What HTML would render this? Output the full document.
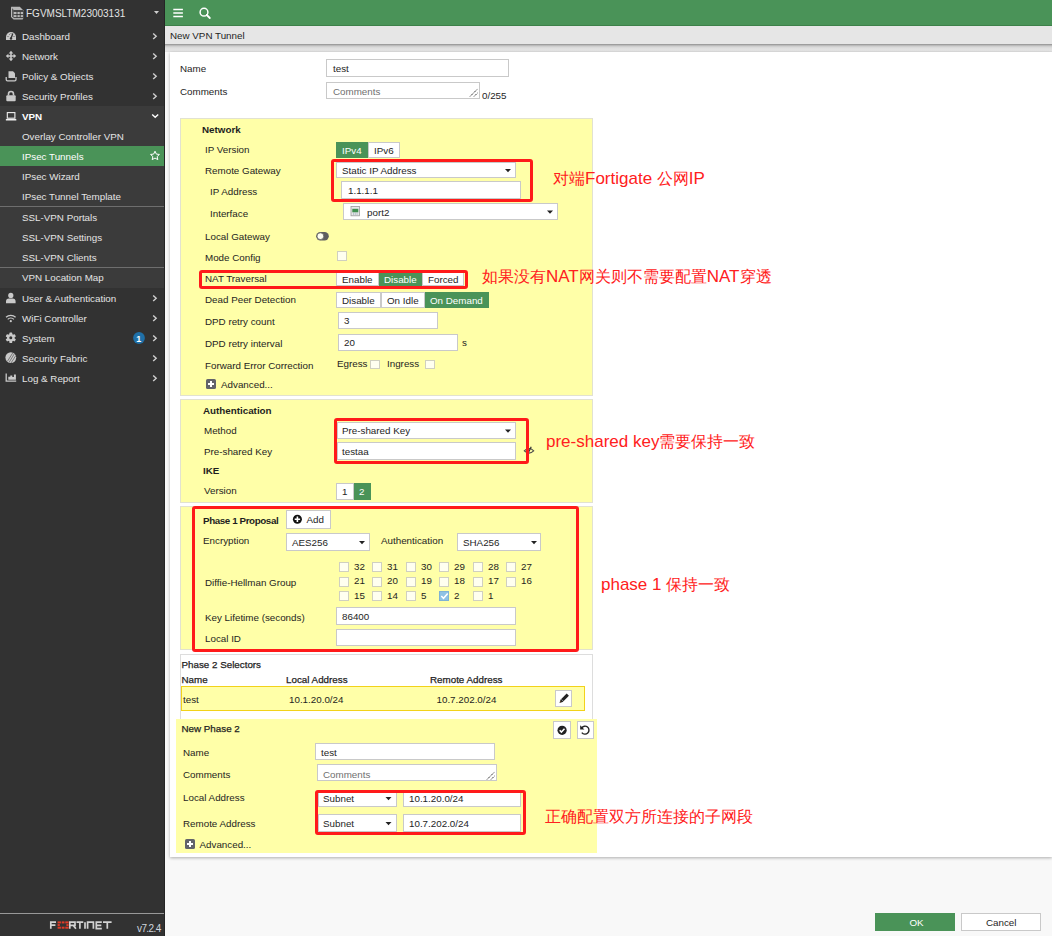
<!DOCTYPE html><html><head><meta charset="utf-8"><style>
*{margin:0;padding:0;box-sizing:border-box}
html,body{width:1052px;height:936px;overflow:hidden;background:#f8f8f8;font-family:"Liberation Sans",sans-serif;font-size:9.8px;color:#1e1e1e}
.t{position:absolute;line-height:12px;white-space:nowrap}
.b{position:absolute}
.side{position:absolute;left:0;top:0;width:165px;height:936px;background:#323232;border-right:1px solid #252525}
.st{color:#e4e4e4}
.bold{font-weight:bold}
.inp{background:#fff;border:1px solid #c9c9c9}
.yel{background:#ffffa8;border:1px solid #e2e2d0}
.red{border:3px solid #ff1a1a;border-radius:3px}
.grn{background:#4a9358;color:#fff}
.ann{color:#ff2020;font-size:16px}
</style></head><body>
<div class="side"></div>
<div class="b " style="left:0px;top:106px;width:164px;height:182px;background:#3b3b3b"></div>
<div class="b " style="left:0px;top:146px;width:164px;height:20px;background:#4a9358"></div>
<div class="b " style="left:0px;top:206px;width:164px;height:1px;background:#6e6e6e"></div>
<div class="b " style="left:0px;top:267px;width:164px;height:1px;background:#6e6e6e"></div>
<svg class="b" style="left:0;top:0" width="165" height="936" viewBox="0 0 165 936">
<path d="M11.2,6.8 h8.6 l3.4,3.4 v8.6 l-0.6,0.6 h-9 l-2.6,-2.4 v-9.2 z" fill="#b8b8b8"/>
<path d="M12.3,8 v8.6 l1.2,1.1 v-7.6 z" fill="#333"/>
<path d="M13.5,10.3 h9.7 v1.4 h-9.7 z" fill="#222"/>
<g fill="#2e2e2e"><rect x="13.5" y="14.2" width="9.7" height="0.9"/><rect x="13.5" y="17.2" width="9.7" height="0.9"/><rect x="16.6" y="11.7" width="0.8" height="5.5"/><rect x="19.8" y="11.7" width="0.8" height="5.5"/></g>
<path d="M154,11 h5 l-2.5,3 z" fill="#cfcfcf"/>
<path d="M6,40 v-3 a5,5 0 0 1 10,0 v3 z" fill="#c9c9c9"/>
<path d="M11,38.5 L12.8,33.5" stroke="#323232" stroke-width="1.3"/>
<circle cx="11" cy="38.5" r="1.2" fill="#323232"/>
<path d="M7.5,36.5 h1 M13.5,36.5 h1 M9,34 l.6 .6 M11,33 v.8" stroke="#323232" stroke-width="0.7"/>
<g fill="#c9c9c9">
<path d="M11,50.8 l2.3,2.6 h-4.6 z M11,61.2 l2.3,-2.6 h-4.6 z M5.8,56 l2.6,-2.3 v4.6 z M16.2,56 l-2.6,-2.3 v4.6 z"/>
</g>
<path d="M11,53 v6 M8,56 h6" stroke="#c9c9c9" stroke-width="1.6"/>
<path d="M8.5,71.3 h4.5 l2,2 v4.7 h-6.5 z" fill="#c9c9c9"/>
<path d="M6.2,77 v2.5 a1.3,1.3 0 0 0 1.3,1.3 h7.2 a1.3,1.3 0 0 0 1.3,-1.3 v-2.5" fill="none" stroke="#c9c9c9" stroke-width="1.3"/>
<path d="M8.5,95.5 v-1.5 a2.5,2.5 0 0 1 5,0 v1.5" fill="none" stroke="#c9c9c9" stroke-width="1.6"/>
<rect x="6.3" y="95.3" width="9.4" height="6" rx="1" fill="#c9c9c9"/>
<rect x="7.3" y="112.6" width="7.6" height="5.6" fill="none" stroke="#f0f0f0" stroke-width="1.1"/>
<rect x="5.8" y="119" width="10.6" height="1.4" rx=".5" fill="#f0f0f0"/>
<circle cx="10.8" cy="295.4" r="2.6" fill="#c9c9c9"/>
<path d="M6,303.2 v-1.8 a3,3 0 0 1 3,-3 h3.6 a3,3 0 0 1 3,3 v1.8 z" fill="#c9c9c9"/>
<path d="M6,317.3 a7,7 0 0 1 9.6,0 M7.7,319.3 a4.3,4.3 0 0 1 6.2,0" fill="none" stroke="#c9c9c9" stroke-width="1.2"/>
<circle cx="10.8" cy="321.2" r="1.1" fill="#c9c9c9"/>
<g transform="translate(10.8,337.8)" fill="#c9c9c9">
<circle r="3.8"/>
<rect x="-1.4" y="-5.2" width="2.8" height="10.4" rx=".6"/>
<rect x="-1.4" y="-5.2" width="2.8" height="10.4" rx=".6" transform="rotate(60)"/>
<rect x="-1.4" y="-5.2" width="2.8" height="10.4" rx=".6" transform="rotate(120)"/>
<circle r="1.5" fill="#323232"/>
</g>
<circle cx="10.8" cy="357.6" r="5.4" fill="#c9c9c9"/>
<path d="M9,362.5 L14.5,353.5 M11,363 L15.8,355.6 M7.3,361.5 L13,352.5" stroke="#555" stroke-width="0.7"/>
<path d="M6.2,373.5 v7.6 h10" fill="none" stroke="#c9c9c9" stroke-width="1.3"/>
<path d="M8.3,379.8 v-3 h2 v-1.4 h2 v1.6 h1.6 v-2.4 h2 v5.2 z" fill="#c9c9c9"/>
<g fill="none" stroke="#cfcfcf" stroke-width="1.4">
<path d="M153.2,33.5 l3,2.8 -3,2.8"/>
<path d="M153.2,53.5 l3,2.8 -3,2.8"/>
<path d="M153.2,73.5 l3,2.8 -3,2.8"/>
<path d="M153.2,93.5 l3,2.8 -3,2.8"/>
<path d="M152.2,114.4 l3,2.8 3,-2.8" stroke="#fff"/>
<path d="M153.2,295.5 l3,2.8 -3,2.8"/>
<path d="M153.2,315.5 l3,2.8 -3,2.8"/>
<path d="M153.2,335.5 l3,2.8 -3,2.8"/>
<path d="M153.2,355.5 l3,2.8 -3,2.8"/>
<path d="M153.2,375.5 l3,2.8 -3,2.8"/>
</g>
<path d="M155,151.2 l1.35,2.9 3.1,.35 -2.3,2.1 .65,3.1 -2.8,-1.6 -2.8,1.6 .65,-3.1 -2.3,-2.1 3.1,-.35 z" fill="none" stroke="#fff" stroke-width="1"/>
<circle cx="139" cy="338" r="5.9" fill="#1f70a8"/>
</svg>
<div class="t " style="left:136.3px;top:332.88px;font-size:9px;color:#fff;font-weight:bold">1</div>
<div class="t st" style="left:26px;top:7.54px;font-size:10px;">FGVMSLTM23003131</div>
<div class="t st" style="left:22px;top:30.60px;">Dashboard</div>
<div class="t st" style="left:22px;top:50.60px;">Network</div>
<div class="t st" style="left:22px;top:70.60px;">Policy &amp; Objects</div>
<div class="t st" style="left:22px;top:90.60px;">Security Profiles</div>
<div class="t st bold" style="left:22px;top:110.60px;color:#fff">VPN</div>
<div class="t st" style="left:22px;top:150.60px;color:#fff">IPsec Tunnels</div>
<div class="t st" style="left:22px;top:130.60px;">Overlay Controller VPN</div>
<div class="t st" style="left:22px;top:170.60px;">IPsec Wizard</div>
<div class="t st" style="left:22px;top:190.60px;">IPsec Tunnel Template</div>
<div class="t st" style="left:22px;top:211.60px;">SSL-VPN Portals</div>
<div class="t st" style="left:22px;top:231.60px;">SSL-VPN Settings</div>
<div class="t st" style="left:22px;top:251.60px;">SSL-VPN Clients</div>
<div class="t st" style="left:22px;top:271.60px;">VPN Location Map</div>
<div class="t st" style="left:22px;top:292.60px;">User &amp; Authentication</div>
<div class="t st" style="left:22px;top:312.60px;">WiFi Controller</div>
<div class="t st" style="left:22px;top:332.60px;">System</div>
<div class="t st" style="left:22px;top:352.60px;">Security Fabric</div>
<div class="t st" style="left:22px;top:372.60px;">Log &amp; Report</div>
<div class="b " style="left:0px;top:913px;width:164px;height:1px;background:#999"></div>
<svg class="b" style="left:0;top:0" width="165" height="936" viewBox="0 0 165 936">
<g fill="none" stroke="#d2d2d2" stroke-width="1.7">
<path d="M56,922.2 h-5.2 v6.5 M50.8,925.2 h4.6"/>
<path d="M69.8,928.7 v-6.5 h5.2 v3.2 h-5.2 M73.3,925.4 l2.6,3.3"/>
<path d="M76.5,922.2 h6.8 M79.9,922.2 v6.5"/>
<path d="M85,922.2 v6.5"/>
<path d="M87.6,928.7 v-6.5 h5.8 v6.5"/>
<path d="M101.8,922.2 h-5.5 v6.5 h5.5 M96.3,925.4 h5"/>
<path d="M103,922.2 h8.6 M107.3,922.2 v6.5"/>
</g>
<g fill="#e03a26">
<rect x="57.6" y="921.4" width="3.3" height="2"/><rect x="61.7" y="921.4" width="2.8" height="2"/><rect x="65.3" y="921.4" width="3.3" height="2"/>
<rect x="57.6" y="924.1" width="2.2" height="1.9"/><rect x="66.4" y="924.1" width="2.2" height="1.9"/>
<rect x="57.6" y="926.7" width="3.3" height="2"/><rect x="61.7" y="926.7" width="2.8" height="2"/><rect x="65.3" y="926.7" width="3.3" height="2"/>
</g></svg>
<div class="t " style="left:137px;top:922.54px;font-size:10px;color:#cfd6de;letter-spacing:-0.6px">v7.2.4</div>
<div class="b " style="left:165px;top:0px;width:887px;height:26px;background:#4a9358;border-bottom:1px solid #3d8049"></div>
<div class="b " style="left:165px;top:26px;width:887px;height:18px;background:#e6e6e6"></div>
<div class="b " style="left:165px;top:44px;width:887px;height:8px;background:linear-gradient(#8d8d8d 0px,#adadad 1px,#c8c8c8 2px,#d6d6d6 3px,#dedede 4px,#e3e3e3 6px,#e6e6e6 7px,#dcdcdc 8px)"></div>
<div class="t " style="left:170px;top:29.60px;">New VPN Tunnel</div>
<div class="b " style="left:170px;top:52px;width:882px;height:805px;background:#fff;box-shadow:0 1px 3px rgba(0,0,0,.3)"></div>
<div class="t " style="left:180px;top:62.60px;">Name</div>
<div class="b inp" style="left:326px;top:59px;width:183px;height:18px;"></div>
<div class="t " style="left:333px;top:62.60px;">test</div>
<div class="t " style="left:180px;top:85.60px;">Comments</div>
<div class="b inp" style="left:326px;top:82px;width:154px;height:17px;"></div>
<div class="t " style="left:333px;top:85.60px;color:#707070">Comments</div>
<div class="t " style="left:482px;top:89.60px;">0/255</div>
<div class="b yel" style="left:180px;top:118px;width:413px;height:278px;"></div>
<div class="t bold" style="left:202px;top:123.60px;">Network</div>
<div class="t " style="left:205px;top:143.60px;">IP Version</div>
<div class="b grn" style="left:336px;top:142px;width:32px;height:16px;"></div>
<div class="t " style="left:342px;top:144.60px;color:#fff">IPv4</div>
<div class="b inp" style="left:368px;top:142px;width:32px;height:16px;"></div>
<div class="t " style="left:374px;top:144.60px;">IPv6</div>
<div class="t " style="left:205px;top:164.60px;">Remote Gateway</div>
<div class="b inp" style="left:336px;top:162px;width:180px;height:16px;"></div>
<div class="t " style="left:342px;top:164.60px;">Static IP Address</div>
<div class="t " style="left:210px;top:185.60px;">IP Address</div>
<div class="b inp" style="left:341px;top:181px;width:180px;height:18px;"></div>
<div class="t " style="left:348px;top:184.60px;">1.1.1.1</div>
<div class="t " style="left:210px;top:207.60px;">Interface</div>
<div class="b inp" style="left:343px;top:203px;width:215px;height:17px;"></div>
<div class="t " style="left:367px;top:206.60px;">port2</div>
<div class="t " style="left:205px;top:230.60px;">Local Gateway</div>
<div class="t " style="left:205px;top:251.60px;">Mode Config</div>
<div class="b " style="left:337px;top:251px;width:10px;height:10px;background:#fffff0;border:1px solid #d0d0c0"></div>
<div class="t " style="left:205px;top:272.60px;">NAT Traversal</div>
<div class="b inp" style="left:336px;top:272px;width:43px;height:14px;"></div>
<div class="t " style="left:342px;top:273.60px;">Enable</div>
<div class="b grn" style="left:379px;top:272px;width:43px;height:14px;"></div>
<div class="t " style="left:384px;top:273.60px;color:#fff">Disable</div>
<div class="b inp" style="left:422px;top:272px;width:42px;height:14px;"></div>
<div class="t " style="left:428px;top:273.60px;">Forced</div>
<div class="t " style="left:205px;top:293.60px;">Dead Peer Detection</div>
<div class="b inp" style="left:336px;top:292px;width:45px;height:16px;"></div>
<div class="t " style="left:342px;top:294.60px;">Disable</div>
<div class="b inp" style="left:381px;top:292px;width:44px;height:16px;"></div>
<div class="t " style="left:387px;top:294.60px;">On Idle</div>
<div class="b grn" style="left:425px;top:292px;width:64px;height:16px;"></div>
<div class="t " style="left:430px;top:294.60px;color:#fff">On Demand</div>
<div class="t " style="left:205px;top:315.60px;">DPD retry count</div>
<div class="b inp" style="left:338px;top:312px;width:100px;height:17px;"></div>
<div class="t " style="left:344px;top:314.60px;">3</div>
<div class="t " style="left:205px;top:337.60px;">DPD retry interval</div>
<div class="b inp" style="left:338px;top:334px;width:120px;height:17px;"></div>
<div class="t " style="left:344px;top:336.60px;">20</div>
<div class="t " style="left:462px;top:336.60px;">s</div>
<div class="t " style="left:205px;top:359.60px;">Forward Error Correction</div>
<div class="t " style="left:337px;top:357.60px;">Egress</div>
<div class="b " style="left:370px;top:360px;width:10px;height:9px;background:#fffff0;border:1px solid #d0d0c0"></div>
<div class="t " style="left:387px;top:357.60px;">Ingress</div>
<div class="b " style="left:425px;top:360px;width:10px;height:9px;background:#fffff0;border:1px solid #d0d0c0"></div>
<div class="t " style="left:221px;top:378.60px;">Advanced...</div>
<div class="b yel" style="left:180px;top:399px;width:413px;height:104px;"></div>
<div class="t bold" style="left:203px;top:404.60px;">Authentication</div>
<div class="t " style="left:204px;top:424.60px;">Method</div>
<div class="b inp" style="left:337px;top:422px;width:179px;height:17px;"></div>
<div class="t " style="left:342px;top:424.60px;">Pre-shared Key</div>
<div class="t " style="left:204px;top:445.60px;">Pre-shared Key</div>
<div class="b inp" style="left:337px;top:442px;width:179px;height:18px;"></div>
<div class="t " style="left:342px;top:445.60px;">testaa</div>
<div class="t bold" style="left:203px;top:464.60px;">IKE</div>
<div class="t " style="left:204px;top:484.60px;">Version</div>
<div class="b inp" style="left:336px;top:483px;width:18px;height:17px;"></div>
<div class="t " style="left:342px;top:485.60px;">1</div>
<div class="b grn" style="left:354px;top:483px;width:17px;height:17px;"></div>
<div class="t " style="left:359px;top:485.60px;color:#fff">2</div>
<div class="b yel" style="left:180px;top:506px;width:413px;height:144px;"></div>
<div class="t bold" style="left:203px;top:514.60px;letter-spacing:-0.4px">Phase 1 Proposal</div>
<div class="b inp" style="left:286px;top:510px;width:45px;height:19px;"></div>
<div class="t " style="left:306.5px;top:513.60px;">Add</div>
<div class="t " style="left:203px;top:534.60px;">Encryption</div>
<div class="b inp" style="left:286px;top:533px;width:84px;height:18px;"></div>
<div class="t " style="left:292px;top:536.60px;">AES256</div>
<div class="t " style="left:381px;top:534.60px;">Authentication</div>
<div class="b inp" style="left:457px;top:533px;width:84px;height:18px;"></div>
<div class="t " style="left:463px;top:536.60px;">SHA256</div>
<div class="t " style="left:205px;top:576.60px;">Diffie-Hellman Group</div>
<div class="b " style="left:339px;top:562px;width:10px;height:10px;background:#fffff0;border:1px solid #d0d0c0"></div>
<div class="t " style="left:354px;top:560.60px;">32</div>
<div class="b " style="left:372px;top:562px;width:10px;height:10px;background:#fffff0;border:1px solid #d0d0c0"></div>
<div class="t " style="left:387px;top:560.60px;">31</div>
<div class="b " style="left:406px;top:562px;width:10px;height:10px;background:#fffff0;border:1px solid #d0d0c0"></div>
<div class="t " style="left:421px;top:560.60px;">30</div>
<div class="b " style="left:439px;top:562px;width:10px;height:10px;background:#fffff0;border:1px solid #d0d0c0"></div>
<div class="t " style="left:454px;top:560.60px;">29</div>
<div class="b " style="left:473px;top:562px;width:10px;height:10px;background:#fffff0;border:1px solid #d0d0c0"></div>
<div class="t " style="left:488px;top:560.60px;">28</div>
<div class="b " style="left:506px;top:562px;width:10px;height:10px;background:#fffff0;border:1px solid #d0d0c0"></div>
<div class="t " style="left:521px;top:560.60px;">27</div>
<div class="b " style="left:339px;top:576.5px;width:10px;height:10.0px;background:#fffff0;border:1px solid #d0d0c0"></div>
<div class="t " style="left:354px;top:575.10px;">21</div>
<div class="b " style="left:372px;top:576.5px;width:10px;height:10.0px;background:#fffff0;border:1px solid #d0d0c0"></div>
<div class="t " style="left:387px;top:575.10px;">20</div>
<div class="b " style="left:406px;top:576.5px;width:10px;height:10.0px;background:#fffff0;border:1px solid #d0d0c0"></div>
<div class="t " style="left:421px;top:575.10px;">19</div>
<div class="b " style="left:439px;top:576.5px;width:10px;height:10.0px;background:#fffff0;border:1px solid #d0d0c0"></div>
<div class="t " style="left:454px;top:575.10px;">18</div>
<div class="b " style="left:473px;top:576.5px;width:10px;height:10.0px;background:#fffff0;border:1px solid #d0d0c0"></div>
<div class="t " style="left:488px;top:575.10px;">17</div>
<div class="b " style="left:506px;top:576.5px;width:10px;height:10.0px;background:#fffff0;border:1px solid #d0d0c0"></div>
<div class="t " style="left:521px;top:575.10px;">16</div>
<div class="b " style="left:339px;top:591px;width:10px;height:10px;background:#fffff0;border:1px solid #d0d0c0"></div>
<div class="t " style="left:354px;top:589.60px;">15</div>
<div class="b " style="left:372px;top:591px;width:10px;height:10px;background:#fffff0;border:1px solid #d0d0c0"></div>
<div class="t " style="left:387px;top:589.60px;">14</div>
<div class="b " style="left:406px;top:591px;width:10px;height:10px;background:#fffff0;border:1px solid #d0d0c0"></div>
<div class="t " style="left:421px;top:589.60px;">5</div>
<div class="b " style="left:439px;top:591px;width:10px;height:10px;background:#8ec2e4;border:1px solid #7fb2d4"></div>
<div class="t " style="left:454px;top:589.60px;">2</div>
<div class="b " style="left:473px;top:591px;width:10px;height:10px;background:#fffff0;border:1px solid #d0d0c0"></div>
<div class="t " style="left:488px;top:589.60px;">1</div>
<div class="t " style="left:205px;top:611.60px;">Key Lifetime (seconds)</div>
<div class="b inp" style="left:336px;top:607px;width:180px;height:18px;"></div>
<div class="t " style="left:342px;top:610.60px;">86400</div>
<div class="t " style="left:205px;top:632.60px;">Local ID</div>
<div class="b inp" style="left:336px;top:629px;width:180px;height:17px;"></div>
<div class="b " style="left:180px;top:654px;width:413px;height:65px;background:#fff;border:1px solid #ddd;border-bottom:none"></div>
<div class="t " style="left:181.5px;top:658.60px;-webkit-text-stroke:0.25px #1e1e1e">Phase 2 Selectors</div>
<div class="t " style="left:181.5px;top:673.60px;-webkit-text-stroke:0.25px #1e1e1e">Name</div>
<div class="t " style="left:286px;top:673.60px;-webkit-text-stroke:0.25px #1e1e1e">Local Address</div>
<div class="t " style="left:430px;top:673.60px;-webkit-text-stroke:0.25px #1e1e1e">Remote Address</div>
<div class="b " style="left:181px;top:686px;width:404px;height:25px;background:#ffffa8;border:1px solid #f2d21a"></div>
<div class="t " style="left:183px;top:693.60px;">test</div>
<div class="t " style="left:289px;top:693.60px;">10.1.20.0/24</div>
<div class="t " style="left:436.5px;top:693.60px;">10.7.202.0/24</div>
<div class="b inp" style="left:555px;top:690px;width:17px;height:17px;"></div>
<div class="b " style="left:176px;top:719px;width:421px;height:134px;background:#ffffa8"></div>
<div class="t " style="left:181.5px;top:722.60px;-webkit-text-stroke:0.25px #1e1e1e">New Phase 2</div>
<div class="b inp" style="left:553px;top:721px;width:18px;height:18px;"></div>
<div class="b inp" style="left:577px;top:721px;width:17px;height:18px;"></div>
<div class="t " style="left:183px;top:746.60px;">Name</div>
<div class="b inp" style="left:315px;top:743px;width:180px;height:17px;"></div>
<div class="t " style="left:321px;top:746.60px;">test</div>
<div class="t " style="left:183px;top:768.60px;">Comments</div>
<div class="b inp" style="left:317px;top:764px;width:180px;height:17px;"></div>
<div class="t " style="left:323px;top:768.60px;color:#707070">Comments</div>
<div class="t " style="left:183px;top:791.60px;">Local Address</div>
<div class="b inp" style="left:317.5px;top:792px;width:79.0px;height:15px;"></div>
<div class="t " style="left:323px;top:792.60px;">Subnet</div>
<div class="b inp" style="left:403px;top:792px;width:118px;height:15px;"></div>
<div class="t " style="left:409px;top:792.60px;">10.1.20.0/24</div>
<div class="t " style="left:183px;top:817.60px;">Remote Address</div>
<div class="b inp" style="left:317.5px;top:814px;width:79.0px;height:18px;"></div>
<div class="t " style="left:323px;top:817.60px;">Subnet</div>
<div class="b inp" style="left:403px;top:814px;width:118px;height:18px;"></div>
<div class="t " style="left:409px;top:817.60px;">10.7.202.0/24</div>
<div class="t " style="left:199.5px;top:838.60px;">Advanced...</div>
<svg class="b" style="left:0;top:0" width="1052" height="936" viewBox="0 0 1052 936"><path d="M173.3,9.6 h9.6 M173.3,13 h9.6 M173.3,16.4 h9.6" stroke="#fff" stroke-width="1.5"/><circle cx="204" cy="12.2" r="3.9" fill="none" stroke="#fff" stroke-width="1.5"/><path d="M206.8,15 L209.8,18" stroke="#fff" stroke-width="1.8" stroke-linecap="round"/><path d="M470,96.5 L477.5,89 M474,96.5 L477.5,93" stroke="#222" stroke-width="0.9" stroke-dasharray="1.5,0.6"/><path d="M487,779.5 L494.5,772 M491,779.5 L494.5,776" stroke="#222" stroke-width="0.9" stroke-dasharray="1.5,0.6"/><path d="M505,169 h6 l-3,3.2 z" fill="#222"/><path d="M547,210.5 h6 l-3,3.2 z" fill="#222"/><path d="M505,429.5 h6 l-3,3.2 z" fill="#222"/><path d="M359,541 h6 l-3,3.2 z" fill="#222"/><path d="M531,541 h6 l-3,3.2 z" fill="#222"/><path d="M385.5,797 h6 l-3,3.2 z" fill="#222"/><path d="M385.5,822 h6 l-3,3.2 z" fill="#222"/><rect x="351" y="206.5" width="8.5" height="9.3" fill="#e8e8e8" stroke="#9a9a9a" stroke-width="0.8"/><rect x="352.3" y="208.8" width="6" height="3.5" fill="#3f8f4e"/><path d="M353.5,212.5 v2.6 M355.3,212.5 v2.6 M357.1,212.5 v2.6" stroke="#9ab" stroke-width="0.6"/><rect x="316.2" y="232" width="12.6" height="8.4" rx="4.2" fill="#5f5f5f"/><circle cx="320.4" cy="236.2" r="3.4" fill="#fffff0" stroke="#5f5f5f" stroke-width="0.8"/><rect x="206" y="379" width="10" height="10" rx="1.6" fill="#62636a"/><path d="M211,381 v6 M208,384 h6" stroke="#fff" stroke-width="2"/><rect x="185" y="839" width="10" height="10" rx="1.6" fill="#62636a"/><path d="M190,841 v6 M187,844 h6" stroke="#fff" stroke-width="2"/><path d="M524.3,450.8 q4.7,-4.6 9.4,0 q-4.7,4.6 -9.4,0 z" fill="none" stroke="#4a4a4a" stroke-width="1.1"/><path d="M527.6,454.2 L531.2,446.8" stroke="#333" stroke-width="1.2"/><circle cx="297.4" cy="519.3" r="4.5" fill="#111"/><path d="M297.4,516.6 v5.4 M294.7,519.3 h5.4" stroke="#fff" stroke-width="1.6"/><path d="M441.3,596 l2.2,2.3 l4.2,-4.8" fill="none" stroke="#fff" stroke-width="1.5"/><path d="M559.5,703 l1,-3.2 l6.2,-6.2 l2.2,2.2 l-6.2,6.2 z" fill="#222"/><path d="M560.2,702.3 l1.1,-0.4 -0.7,-0.7 z" fill="#c9762a"/><path d="M561.4,699.3 l2.2,2.2" stroke="#fff" stroke-width="0.5"/><circle cx="562.1" cy="730.3" r="4.6" fill="#222"/><path d="M559.7,730.3 l1.7,1.8 l3.1,-3.3" fill="none" stroke="#fff" stroke-width="1.5"/><path d="M581.6,728 a4,4 0 1 1 0.2,4.6" fill="none" stroke="#222" stroke-width="1.4"/><path d="M580.2,725.3 v4.2 h4.2 z" fill="#222"/></svg>
<div class="b grn" style="left:875px;top:913px;width:80px;height:18px;"></div>
<div class="t " style="left:909.5px;top:916.60px;color:#fff">OK</div>
<div class="b inp" style="left:961px;top:913px;width:80px;height:18px;"></div>
<div class="t " style="left:986px;top:916.60px;">Cancel</div>
<div class="b red" style="left:331px;top:159px;width:202px;height:43px;"></div>
<div class="b red" style="left:199px;top:270px;width:269px;height:19px;"></div>
<div class="b red" style="left:334px;top:418px;width:195px;height:46px;"></div>
<div class="b red" style="left:192px;top:506px;width:387px;height:146px;"></div>
<div class="b red" style="left:315px;top:789.5px;width:211px;height:45.5px;"></div>
<div class="t ann" style="left:553px;top:169.46px;line-height:20px">对端<span style="font-size:17px">Fortigate </span>公网<span style="font-size:17px">IP</span></div>
<div class="t ann" style="left:482px;top:267.46px;line-height:20px">如果没有<span style="font-size:17px">NAT</span>网关则不需要配置<span style="font-size:17px">NAT</span>穿透</div>
<div class="t ann" style="left:546px;top:432.46px;line-height:20px"><span style="font-size:17px">pre-shared key</span>需要保持一致</div>
<div class="t ann" style="left:601px;top:574.96px;line-height:20px"><span style="font-size:17px">phase 1 </span>保持一致</div>
<div class="t ann" style="left:545px;top:807.46px;line-height:20px">正确配置双方所连接的子网段</div>
</body></html>
